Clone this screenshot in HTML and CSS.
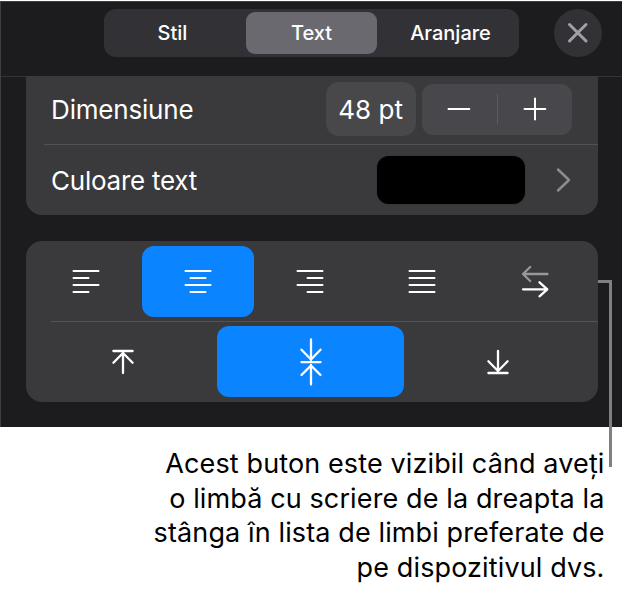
FILE: index.html
```html
<!DOCTYPE html>
<html lang="ro">
<head>
    <meta charset="UTF-8">
    <meta name="viewport" content="width=device-width, initial-scale=1.0">
    <title>Format text</title>
    <link rel="stylesheet" href="styles.css">
</head>
<body>
    <div class="panel">
        <div class="header">
            <div class="tabs">
                <button class="tab tab-stil">Stil</button>
                <button class="tab active">Text</button>
                <button class="tab tab-aranjare">Aranjare</button>
            </div>
            <button class="close" aria-label="Închide">
                <svg width="48" height="48" viewBox="0 0 48 48"><path d="M15.5 15.5L32 32M32 15.5L15.5 32"/></svg>
            </button>
        </div>

        <div class="group text-group">
            <div class="row size-row">
                <span class="label">Dimensiune</span>
                <span class="size">48 pt</span>
                <div class="stepper">
                    <button aria-label="Minus"><svg width="24" height="24" viewBox="0 0 24 24"><path d="M1.5 12H22.3"/></svg></button>
                    <button aria-label="Plus"><svg width="24" height="24" viewBox="0 0 24 24"><path d="M1.5 12H22.3M12 1.6V22.4"/></svg></button>
                </div>
            </div>
            <div class="row color-row">
                <span class="label">Culoare text</span>
                <span class="swatch"></span>
                <svg class="chevron" width="16" height="26" viewBox="0 0 16 26"><path d="M2 2.5L13 13L2 23.5"/></svg>
            </div>
        </div>

        <div class="group align-group">
            <div class="horizontal">
                <button aria-label="Stânga"><svg width="28" height="28" viewBox="0 0 28 28"><path d="M1.5 3H26.5M1.5 10H16.5M1.5 17H26.5M1.5 24H16.5"/></svg></button>
                <button class="selected" aria-label="Centru"><svg width="28" height="28" viewBox="0 0 28 28"><path d="M1.5 3H26.5M6.5 10H21.5M1.5 17H26.5M6.5 24H21.5"/></svg></button>
                <button aria-label="Dreapta"><svg width="28" height="28" viewBox="0 0 28 28"><path d="M1.5 3H26.5M11.5 10H26.5M1.5 17H26.5M11.5 24H26.5"/></svg></button>
                <button aria-label="Justificat"><svg width="28" height="28" viewBox="0 0 28 28"><path d="M1.5 3H26.5M1.5 10H26.5M1.5 17H26.5M1.5 24H26.5"/></svg></button>
                <button class="direction" aria-label="Direcție text">
                    <svg width="28" height="34" viewBox="0 0 28 34">
                        <path class="muted" d="M26.5 9H2M9.2 2L2 9L9.2 16"/>
                        <path d="M2 24.3H26.3M18.5 17.3L26.3 24.3L18.5 31.3"/>
                    </svg>
                </button>
            </div>
            <div class="vertical">
                <button aria-label="Sus"><svg width="24" height="26" viewBox="0 0 24 26"><path d="M2.4 2H21.6M12 24V4M2.4 13.7L12 4L21.6 13.7"/></svg></button>
                <button class="selected" aria-label="Mijloc"><svg width="24" height="48" viewBox="0 0 24 48"><path d="M2.5 24.2H21.5M12 1.5V22M2.5 11.7L12 21.5L21.5 11.7M12 46.5V27M2.5 37L12 27.5L21.5 37"/></svg></button>
                <button aria-label="Jos"><svg width="24" height="26" viewBox="0 0 24 26"><path d="M2.4 24H21.6M12 2V22M2.4 12.3L12 22L21.6 12.3"/></svg></button>
            </div>
        </div>
    </div>

    <p class="caption">
        Acest buton este vizibil când aveți<br>
        o limbă cu scriere de la dreapta la<br>
        stânga în lista de limbi preferate de<br>
        pe dispozitivul dvs.
    </p>
    <div class="callout"></div>
</body>
</html>
```

FILE: styles.css
```css
* {
    box-sizing: border-box;
}
body {
    position: relative;
    margin: 0;
    padding-top: 1px;
    width: 622px;
    height: 599px;
    overflow: hidden;
    background-color: #fff;
    font-family: Inter, "Liberation Sans", sans-serif;
}
button {
    display: flex;
    align-items: center;
    justify-content: center;
    padding: 0;
    border: none;
    background: none;
    color: #fff;
    font-family: inherit;
}
svg {
    display: block;
    fill: none;
    stroke: #fff;
    stroke-width: 2;
    stroke-linecap: round;
    stroke-linejoin: round;
}
.panel {
    height: 426px;
    border-top: 1px solid #3c3f41;
    border-left: 1px solid #3c3e40;
    background-color: #1c1c1e;
}
.header {
    display: flex;
    height: 75px;
    padding: 7px 0 0 103px;
    border-bottom: 1px solid #343436;
}
.tabs {
    display: flex;
    width: 415px;
    height: 48px;
    padding: 3px;
    border-radius: 12px;
    background-color: #323236;
}
.tab {
    width: 139px;
    font-size: 20px;
    font-weight: 500;
}
.tab-stil {
    padding-right: 8px;
}
.tab-aranjare {
    padding-left: 8px;
}
.tab.active {
    width: 131px;
    border-radius: 9px;
    background-color: #69696f;
}
.close {
    width: 48px;
    height: 48px;
    margin-left: 35px;
    border-radius: 50%;
    background-color: #323236;
}
.close svg {
    stroke: #a0a0a8;
    stroke-width: 3;
}
.group {
    width: 572px;
    margin-left: 24.6px;
    background-color: #3a3a3c;
}
.text-group {
    height: 139px;
    margin-top: -1px;
    border-radius: 0 0 16px 16px;
}
.row {
    display: flex;
    align-items: center;
    padding-left: 25.5px;
}
.size-row {
    height: 68px;
    padding-bottom: 2px;
}
.label {
    width: 274.5px;
    color: #fff;
    font-size: 26px;
    letter-spacing: -0.2px;
}
.size {
    width: 90px;
    height: 54px;
    border-radius: 13px;
    background-color: #48484a;
    color: #fff;
    font-size: 26px;
    line-height: 56px;
    text-align: center;
}
.stepper {
    display: flex;
    width: 150px;
    height: 51px;
    margin-left: 6px;
    border-radius: 11px;
    background-color: #48484c;
}
.stepper button {
    width: 75px;
    padding-left: 1px;
}
.stepper button:first-child {
    padding-left: 0;
}
.stepper button + button {
    background: linear-gradient(#5c5c60, #5c5c60) left center / 1px 30px no-repeat;
}
.color-row {
    position: relative;
    height: 71px;
}
.color-row::before {
    content: "";
    position: absolute;
    top: 0;
    left: 18px;
    right: 0;
    height: 1px;
    background-color: #525254;
}
.color-row .label {
    width: 325.5px;
    padding-top: 2px;
    letter-spacing: -0.25px;
}
.swatch {
    width: 148px;
    height: 48px;
    margin-top: 1px;
    border-radius: 12px;
    background-color: #000;
    box-shadow: 0 0 1px #1a1a1a;
}
.chevron {
    margin-top: 1px;
    margin-left: 31px;
    stroke: #8c8c8f;
    stroke-width: 2.5;
}
.align-group {
    height: 161px;
    margin-top: 26px;
    border-radius: 16px;
}
.horizontal {
    display: flex;
    height: 81px;
    padding: 5px 0 4px 4px;
    background: linear-gradient(#525254, #525254) 25px bottom / 547px 1px no-repeat;
}
.horizontal button {
    width: 112px;
    height: 71px;
    border-radius: 12px;
}
.horizontal .direction {
    padding-left: 3px;
}
.vertical {
    display: flex;
    padding: 4px 0 0 4px;
}
.vertical button {
    width: 187.3px;
    height: 71px;
    border-radius: 12px;
}
.horizontal .selected,
.vertical .selected {
    background-color: #0a84ff;
}
.vertical svg,
.direction svg {
    stroke-width: 2.3;
}
.muted {
    stroke: #98989a;
}
.caption {
    margin: 20px 17.5px 0 0;
    color: #000;
    font-size: 27px;
    line-height: 34.6px;
    letter-spacing: 0.12px;
    text-align: right;
    white-space: nowrap;
}
.callout {
    position: absolute;
    top: 280px;
    left: 598px;
    width: 14px;
    height: 187px;
    border-top: 3px solid #808080;
    border-right: 3px solid #808080;
}
```
